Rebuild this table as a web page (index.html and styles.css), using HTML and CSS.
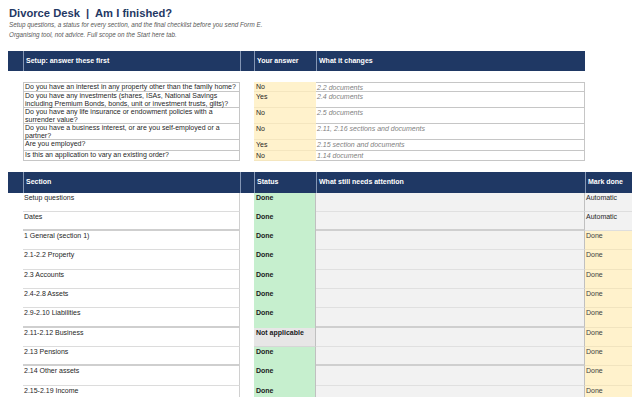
FILE: index.html
```html
<!DOCTYPE html>
<html lang="en">
<head>
<meta charset="utf-8">
<title>Divorce Desk | Am I finished?</title>
<link rel="stylesheet" href="styles.css">
</head>
<body>
<header class="intro">
  <h1 class="title">Divorce Desk &nbsp;|&nbsp; Am I finished?</h1>
  <p class="sub">Setup questions, a status for every section, and the final checklist before you send Form E.</p>
  <p class="sub">Organising tool, not advice. Full scope on the Start here tab.</p>
</header>

<section class="grid setup">
  <div class="hd"></div>
  <div class="hd sep">Setup: answer these first</div>
  <div class="hd sep"></div>
  <div class="hd sep">Your answer</div>
  <div class="hd sep">What it changes</div>
  <div class="spacer"></div>

  <div class="blank"></div><div class="q first">Do you have an interest in any property other than the family home?</div><div class="blank"></div><div class="ans">No</div><div class="chg first">2.2 documents</div>
  <div class="blank"></div><div class="q">Do you have any investments (shares, ISAs, National Savings including Premium Bonds, bonds, unit or investment trusts, gilts)?</div><div class="blank"></div><div class="ans">Yes</div><div class="chg">2.4 documents</div>
  <div class="blank"></div><div class="q">Do you have any life insurance or endowment policies with a surrender value?</div><div class="blank"></div><div class="ans">No</div><div class="chg">2.5 documents</div>
  <div class="blank"></div><div class="q">Do you have a business interest, or are you self-employed or a partner?</div><div class="blank"></div><div class="ans">No</div><div class="chg">2.11, 2.16 sections and documents</div>
  <div class="blank"></div><div class="q">Are you employed?</div><div class="blank"></div><div class="ans">Yes</div><div class="chg">2.15 section and documents</div>
  <div class="blank"></div><div class="q">Is this an application to vary an existing order?</div><div class="blank"></div><div class="ans">No</div><div class="chg">1.14 document</div>
</section>

<section class="grid status">
  <div class="hd"></div>
  <div class="hd sep">Section</div>
  <div class="hd sep"></div>
  <div class="hd sep">Status</div>
  <div class="hd sep">What still needs attention</div>
  <div class="hd sep">Mark done</div>

  <div class="blank"></div><div class="sec">Setup questions</div><div class="blank"></div><div class="st done">Done</div><div class="att"></div><div class="mk auto">Automatic</div>
  <div class="blank"></div><div class="sec thick">Dates</div><div class="blank"></div><div class="st done">Done</div><div class="att thick"></div><div class="mk auto thick">Automatic</div>
  <div class="blank"></div><div class="sec">1 General (section 1)</div><div class="blank"></div><div class="st done">Done</div><div class="att"></div><div class="mk">Done</div>
  <div class="blank"></div><div class="sec">2.1-2.2 Property</div><div class="blank"></div><div class="st done">Done</div><div class="att"></div><div class="mk">Done</div>
  <div class="blank"></div><div class="sec">2.3 Accounts</div><div class="blank"></div><div class="st done">Done</div><div class="att"></div><div class="mk">Done</div>
  <div class="blank"></div><div class="sec">2.4-2.8 Assets</div><div class="blank"></div><div class="st done">Done</div><div class="att"></div><div class="mk">Done</div>
  <div class="blank"></div><div class="sec thick">2.9-2.10 Liabilities</div><div class="blank"></div><div class="st done">Done</div><div class="att thick"></div><div class="mk">Done</div>
  <div class="blank"></div><div class="sec">2.11-2.12 Business</div><div class="blank"></div><div class="st na">Not applicable</div><div class="att"></div><div class="mk">Done</div>
  <div class="blank"></div><div class="sec thick">2.13 Pensions</div><div class="blank"></div><div class="st done">Done</div><div class="att thick"></div><div class="mk">Done</div>
  <div class="blank"></div><div class="sec">2.14 Other assets</div><div class="blank"></div><div class="st done">Done</div><div class="att"></div><div class="mk">Done</div>
  <div class="blank"></div><div class="sec">2.15-2.19 Income</div><div class="blank"></div><div class="st done">Done</div><div class="att"></div><div class="mk">Done</div>
</section>
</body>
</html>
```

FILE: styles.css
```css
* { box-sizing: border-box; }

html, body {
  margin: 0;
  padding: 0;
  background: #ffffff;
  overflow: hidden;
}

body {
  padding: 0 8px;
  font-family: "Liberation Sans", Arial, sans-serif;
  color: #262626;
}

.intro { padding-top: 6px; }

.title {
  margin: 0 0 0 1px;
  font-size: 11.2px;
  line-height: 14px;
  font-weight: bold;
  color: #1f3864;
}

.sub {
  margin: 0 0 0 1px;
  font-size: 6.3px;
  line-height: 10px;
  font-style: italic;
  color: #595959;
}

.grid {
  display: grid;
  font-size: 7px;
  line-height: 8px;
}

.setup {
  margin-top: 11px;
  grid-template-columns: 15px 217px 14px 62px 269px;
  grid-template-rows: 20px 11px 10px 16px 16px 16px 11px 10px;
}

.status {
  margin-top: 11px;
  grid-template-columns: 15px 217px 14px 62px 269px 47px;
  grid-template-rows: 20.5px repeat(11, 19.33px);
}

.hd {
  background: #1f3864;
  color: #ffffff;
  font-weight: bold;
  display: flex;
  align-items: center;
  padding-left: 2px;
}

.hd.sep { border-left: 1px solid #8496b4; }

.spacer { grid-column: 1 / -1; }

.blank { background: #ffffff; }

.q {
  border: 1px solid #c6c6c6;
  border-top: none;
  padding: 0 2px 0 1px;
  color: #1f1f1f;
}

.q.first, .chg.first { border-top: 1px solid #c6c6c6; }

.ans {
  background: #fff2cc;
  padding: 1px 2px 0;
  color: #1f1f1f;
  border-bottom: 1px solid #f4e6bf;
}

.chg {
  border-right: 1px solid #c6c6c6;
  border-bottom: 1px solid #c6c6c6;
  padding: 1px 1px 0;
  font-style: italic;
  color: #7f7f7f;
}

.sec {
  background: #ffffff;
  border-right: 1px solid #d0d0d0;
  border-bottom: 1px solid #dcdcdc;
  padding: 1px 2px 0 1px;
  color: #262626;
}

.sec.thick, .att.thick, .mk.thick { border-bottom: 2px solid #cfcfcf; }

.st {
  padding: 1px 2px 0;
  font-weight: bold;
  color: #1a1a1a;
  border-right: 1px solid #c0c0c0;
}

.st.done { background: #c6efce; }
.st.na { background: #e7e6e6; border-bottom: 1px solid #d6d6d6; }

.att {
  background: #f2f2f2;
  border-right: 1px solid #c0c0c0;
  border-bottom: 1px solid #e0e0e0;
}

.mk {
  background: #fff2cc;
  padding: 1px 1px 0;
  color: #404040;
  border-bottom: 1px solid #f1e4bf;
}

.mk.auto {
  background: #f2f2f2;
  color: #262626;
  border-bottom: 1px solid #dedede;
}
```
